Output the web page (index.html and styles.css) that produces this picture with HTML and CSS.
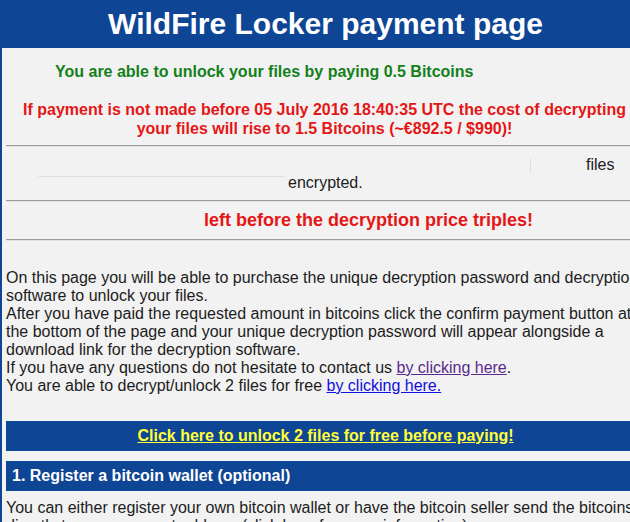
FILE: index.html
```html
<!DOCTYPE html>
<html lang="en">
<head>
<meta charset="utf-8">
<title>WildFire Locker payment page</title>
<link rel="stylesheet" href="styles.css">
</head>
<body>
<div class="page">
  <header class="masthead">
    <h1 class="title">WildFire Locker payment page</h1>
  </header>
  <main class="content">
    <p class="price">You are able to unlock your files by paying 0.5 Bitcoins</p>
    <p class="warning">If payment is not made before 05 July 2016 18:40:35 UTC the cost of decrypting your files will rise to 1.5 Bitcoins (~€892.5 / $990)!</p>
    <hr class="rule">
    <div class="stats">
      <div class="stats-row">
        <span class="vbar"></span>
        <span class="files">files</span>
      </div>
      <div class="stats-row">
        <span class="track"></span>
        <span class="encrypted">encrypted.</span>
      </div>
    </div>
    <hr class="rule">
    <p class="countdown">left before the decryption price triples!</p>
    <hr class="rule">
    <p class="intro">On this page you will be able to purchase the unique decryption password and decryption software to unlock your files.<br>After you have paid the requested amount in bitcoins click the confirm payment button at the bottom of the page and your unique decryption password will appear alongside a download link for the decryption software.<br>If you have any questions do not hesitate to contact us <a class="link visited" href="#">by clicking here</a>.<br>You are able to decrypt/unlock 2 files for free <a class="link" href="#">by clicking here.</a></p>
    <div class="bar bar-center"><a class="free-link" href="#">Click here to unlock 2 files for free before paying!</a></div>
    <div class="bar bar-step">1. Register a bitcoin wallet (optional)</div>
    <p class="step-text">You can either register your own bitcoin wallet or have the bitcoin seller send the bitcoins directly to your payment address (click here for more information).</p>
  </main>
</div>
</body>
</html>
```
FILE: styles.css
```css
html, body {
  margin: 0;
  padding: 0;
  overflow: hidden;
  background: #f2f2f2;
}
body {
  font-family: "Liberation Sans", Arial, sans-serif;
  font-size: 16px;
  color: #1c1c1c;
}
.page {
  width: 651px;
}
.masthead {
  background: #0f4595;
  height: 48px;
}
.title {
  margin: 0;
  color: #ffffff;
  font-size: 30px;
  font-weight: bold;
  line-height: 48px;
  text-align: center;
}
.content {
  border-left: 2px solid #0f4595;
  border-right: 2px solid #0f4595;
  padding: 1px 4px 0 4px;
}
.price {
  margin: 14px 0 0 49px;
  color: #13801a;
  font-weight: bold;
}
.warning {
  margin: 19px 0 0 0;
  padding: 0 2px 0 0;
  color: #e51616;
  font-weight: bold;
  text-align: center;
  line-height: 19px;
}
.rule {
  margin: 0;
  height: 0;
  border: 0;
  border-top: 1px solid #9b9b9b;
  border-bottom: 1px solid #e2e2e2;
}
.warning + .rule {
  margin-top: 7px;
}
.stats {
  margin: 9px 0 8px 0;
}
.stats-row {
  display: flex;
  align-items: flex-start;
  line-height: 18px;
}
.vbar {
  width: 1px;
  height: 15px;
  margin: 2px 0 0 524px;
  background: #dcdcf4;
}
.files {
  margin-left: 55px;
}
.track {
  width: 247px;
  height: 0;
  margin: 2px 0 0 32px;
  border-top: 1px solid #e0e0e0;
}
.encrypted {
  margin-left: 3px;
}
.countdown {
  margin: 8px 0 8px 0;
  padding-left: 86px;
  color: #e51616;
  font-size: 18px;
  font-weight: bold;
  text-align: center;
}
.intro {
  margin: 28px 0 26px 0;
}
.link {
  color: #1010e0;
}
.link.visited {
  color: #5a2a8e;
}
.bar {
  background: #0f4595;
  height: 30px;
  line-height: 30px;
  font-weight: bold;
  color: #ffffff;
}
.bar-center {
  text-align: center;
}
.free-link {
  color: #ffff3a;
}
.bar-step {
  margin-top: 10px;
  padding-left: 6px;
}
.step-text {
  margin: 8px 0 0 0;
}
```
